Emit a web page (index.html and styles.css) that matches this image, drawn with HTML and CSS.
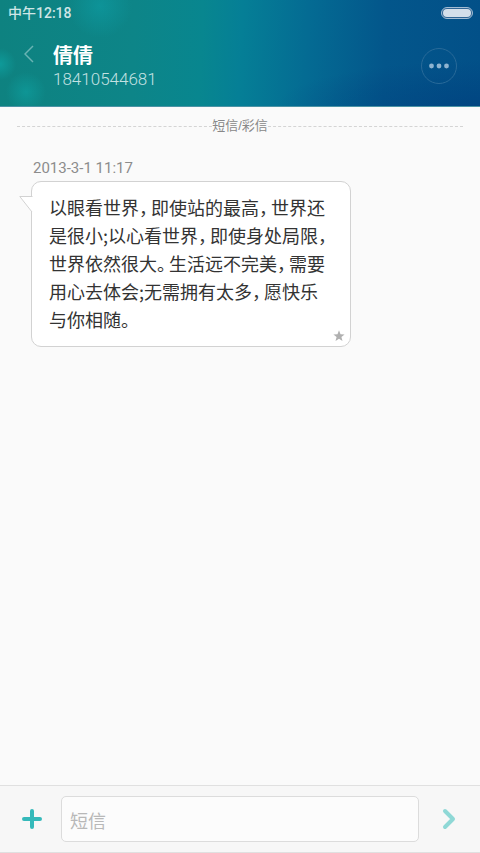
FILE: index.html
```html
<!DOCTYPE html>
<html lang="zh-CN">
<head>
<meta charset="utf-8">
<meta name="viewport" content="width=device-width, initial-scale=1">
<title>倩倩</title>
<link rel="stylesheet" href="styles.css">
</head>
<body>
<header class="top">
  <div class="status">
    <span>中午12:18</span>
    <svg class="battery" width="32" height="12" viewBox="0 0 32 12" aria-hidden="true">
      <rect x=".5" y=".5" width="31" height="11" rx="5.5" fill="#2f6594" stroke="#a3bcd3"/>
      <rect x="2" y="2" width="28" height="8" rx="4" fill="#d4dfea"/>
    </svg>
  </div>
  <div class="titlebar">
    <button class="back" type="button" aria-label="返回">
      <svg width="10" height="18" viewBox="0 0 10 18" aria-hidden="true"><path d="M9 1 1 9l8 8"/></svg>
    </button>
    <div class="contact">
      <h1>倩倩</h1>
      <p>18410544681</p>
    </div>
    <button class="more" type="button" aria-label="更多">
      <svg width="20" height="6" viewBox="0 0 20 6" aria-hidden="true"><circle cx="2.5" cy="3" r="2.4"/><circle cx="10" cy="3" r="2.4"/><circle cx="17.5" cy="3" r="2.4"/></svg>
    </button>
  </div>
</header>
<main class="thread">
  <div class="divider"><span>短信/彩信</span></div>
  <article class="message">
    <time datetime="2013-03-01T11:17">2013-3-1 11:17</time>
    <div class="bubble">
      <svg class="tail" width="14" height="18" viewBox="0 0 14 18" aria-hidden="true"><path d="M13.500 .5H.8L13 16"/></svg>
      <p>以眼看世界<span class="mark">&#xFF0C;</span>即使站的最高<span class="mark">&#xFF0C;</span>世界还<br>是很小;以心看世界<span class="mark">&#xFF0C;</span>即使身处局限<span class="mark">&#xFF0C;</span><br>世界依然很大<span class="mark">。</span>生活远不完美<span class="mark">&#xFF0C;</span>需要<br>用心去体会;无需拥有太多<span class="mark">&#xFF0C;</span>愿快乐<br>与你相随<span class="mark">。</span></p>
      <svg class="star" width="12" height="12" viewBox="0 0 12 12" aria-hidden="true"><path d="m6 .3 1.500 3.900 4.100.2-3.200 2.600 1.100 4L6 8.700l-3.500 2.300 1.100-4L.4 4.400l4.100-.2z"/></svg>
    </div>
  </article>
</main>
<form class="composer">
  <button class="add" type="button" aria-label="添加">
    <svg width="22" height="22" viewBox="0 0 22 22" aria-hidden="true"><path d="M11 3v16M3 11h16"/></svg>
  </button>
  <input type="text" placeholder="短信" aria-label="短信">
  <button class="send" type="button" aria-label="发送">
    <svg width="14" height="22" viewBox="0 0 14 22" aria-hidden="true"><path d="m3 3 8 8-8 8"/></svg>
  </button>
</form>
</body>
</html>
```
FILE: styles.css
```css
* {
  box-sizing: border-box;
}

body {
  margin: 0;
  min-height: 100vh;
  display: flex;
  flex-direction: column;
  background: #fafafa;
  color: #333;
  font-family: "Liberation Sans", "Noto Sans CJK SC", sans-serif;
}

h1,
p {
  margin: 0;
}

button {
  padding: 0;
  border: 0;
  background: none;
  display: flex;
  align-items: center;
  justify-content: center;
}

svg {
  display: block;
  fill: none;
}

.top {
  border-bottom: 1px solid #4b93a5;
  color: #fff;
  background:
    radial-gradient(circle at 100px 6px, rgba(14, 170, 180, .4), transparent 32px),
    radial-gradient(circle at 0 64px, rgba(14, 170, 170, .6), transparent 16px),
    radial-gradient(circle at 26px 92px, rgba(14, 165, 165, .55), transparent 20px),
    radial-gradient(ellipse at 100% 100%, rgba(0, 62, 125, .6), transparent 30%),
    linear-gradient(92deg, #0e8280 0%, #0d8588 28%, #08868f 42%, #057f96 50%, #046b93 64%, #03568b 80%, #025088 100%);
}

.status {
  height: 26px;
  padding: 0 7px 0 8px;
  display: flex;
  align-items: center;
  justify-content: space-between;
  font-family: Roboto, "Noto Sans CJK SC", sans-serif;
  font-size: 14px;
  font-weight: 500;
  line-height: 26px;
  color: #cfe6e6;
}

.titlebar {
  min-height: 80px;
  padding: 0 23px 0 21px;
  display: flex;
  align-items: center;
}

.back {
  width: 16px;
  height: 40px;
  margin-bottom: 24px;
}

.back svg {
  stroke: #69b4b3;
  stroke-width: 1.5;
}

.contact {
  flex: 1;
  padding-left: 16px;
}

.contact h1 {
  font-family: "Noto Sans CJK SC", sans-serif;
  font-size: 20px;
  font-weight: 700;
  line-height: 26px;
}

.contact p {
  font-family: Roboto, sans-serif;
  font-size: 17px;
  font-weight: 300;
  line-height: 22px;
  color: #c3e1e2;
}

.more {
  width: 36px;
  height: 36px;
  border: 1px solid #286a99;
  border-radius: 50%;
}

.more svg {
  fill: #8fb4d0;
}

.thread {
  flex: 1;
  padding: 8px 17px;
}

.divider {
  display: flex;
  align-items: center;
  font-size: 13px;
  line-height: 22px;
  color: #888;
}

.divider::before,
.divider::after {
  content: "";
  flex: 1;
  border-top: 1px dashed #d4d4d4;
}

.message {
  padding: 21px 0 0 14px;
}

.message time {
  display: block;
  padding-left: 2px;
  font-family: Roboto, sans-serif;
  font-size: 15px;
  line-height: 20px;
  color: #8c8c8c;
}

.bubble {
  position: relative;
  width: fit-content;
  min-width: 320px;
  margin-top: 3px;
  padding: 11px 17px 13px;
  border: 1px solid #d2d2d2;
  border-radius: 10px;
  background: #fff;
  font-family: "Noto Sans CJK SC", sans-serif;
  font-size: 18px;
  line-height: 28px;
}

.bubble p {
  white-space: nowrap;
}

.mark {
  padding-right: 3px;
  font-feature-settings: "halt";
}

.tail {
  position: absolute;
  left: -13px;
  top: 14px;
}

.tail path {
  fill: #fff;
  stroke: #d2d2d2;
}

.star {
  position: absolute;
  right: 5px;
  bottom: 4px;
  fill: #b0b0b0;
}

.composer {
  display: flex;
  align-items: center;
  padding: 10px 0;
  border-top: 1px solid #e0e0e0;
  border-bottom: 1px solid #e0e0e0;
  background: #f7f7f7;
}

.composer button {
  width: 61px;
  height: 46px;
}

.composer path {
  stroke-width: 4;
  stroke-linecap: round;
  stroke-linejoin: round;
}

.composer input {
  flex: 1;
  min-width: 0;
  height: 46px;
  padding: 6px 8px 0;
  border: 1px solid #dcdcdc;
  border-radius: 5px;
  background: #fcfcfc;
  color: #333;
  font: inherit;
  font-size: 18px;
}

.composer input::placeholder {
  color: #b8b8b8;
}

.composer .add {
  padding-left: 2px;
}

.composer .send {
  padding-right: 2px;
}

.add path {
  stroke: #35b9ba;
}

.send path {
  stroke: #8fd8d6;
}
```
